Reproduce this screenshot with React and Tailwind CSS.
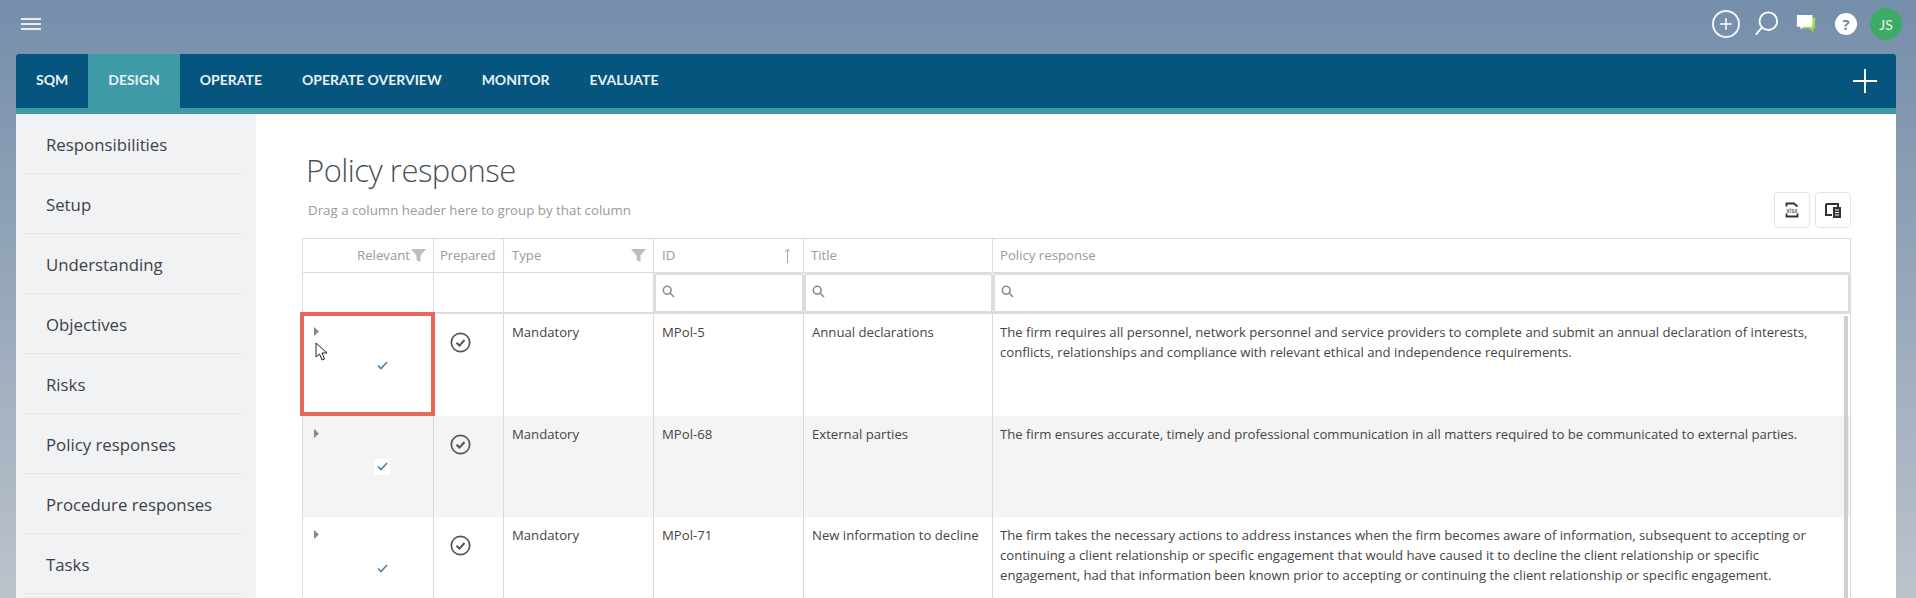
import { Plus } from "lucide-react";

const tabs = ["SQM", "DESIGN", "OPERATE", "OPERATE OVERVIEW", "MONITOR", "EVALUATE"];
const sideItems = ["Responsibilities", "Setup", "Understanding", "Objectives", "Risks", "Policy responses", "Procedure responses", "Tasks"];
const cols = "grid grid-cols-[131px_70px_150px_150px_189px_1fr]";

const rows = [
  {
    id: "MPol-5",
    title: "Annual declarations",
    text: "The firm requires all personnel, network personnel and service providers to complete and submit an annual declaration of interests, conflicts, relationships and compliance with relevant ethical and independence requirements.",
  },
  {
    id: "MPol-68",
    title: "External parties",
    text: "The firm ensures accurate, timely and professional communication in all matters required to be communicated to external parties.",
  },
  {
    id: "MPol-71",
    title: "New information to decline",
    text: "The firm takes the necessary actions to address instances when the firm becomes aware of information, subsequent to accepting or continuing a client relationship or specific engagement that would have caused it to decline the client relationship or specific engagement, had that information been known prior to accepting or continuing the client relationship or specific engagement.",
  },
];

function Filter() {
  return (
    <svg width="15" height="15" viewBox="0 0 15 15" className="fill-[#bdbdbd]">
      <path d="M0 1h15L9.5 7.5V14l-4-2V7.5z" />
    </svg>
  );
}

function SearchBox() {
  return (
    <div className="h-[40px] border-2 border-[#dcdcdc] rounded-[3px] flex items-center pl-[6px] pb-[3px] bg-white">
      <svg width="13" height="13" viewBox="0 0 13 13" fill="none" className="stroke-[#8a8a8a] stroke-[1.6]">
        <circle cx="5.2" cy="5.2" r="3.9" />
        <path d="M8 8l4 4" />
      </svg>
    </div>
  );
}

function Row({ row, striped }) {
  const cell = "border-r border-[#d9d9d9] h-[101.5px]";
  return (
    <div className={`${cols} ${striped ? "bg-[#f4f4f4]" : "bg-white"} text-[13.15px] leading-[20px] text-[#444]`}>
      <div className={`${cell} relative`}>
        <svg width="5" height="9" viewBox="0 0 5 9" className="absolute left-[11px] top-[13px] fill-[#888]">
          <path d="M0 0l5 4.5L0 9z" />
        </svg>
        <div className="absolute left-[71px] top-[43px] w-[16px] h-[16px] bg-white flex items-center justify-center">
          <svg width="11" height="9" viewBox="0 0 11 9" fill="none" className="stroke-[#4a7fae] stroke-[1.6]">
            <path d="M1 4.5L4 7.5 10 1" />
          </svg>
        </div>
      </div>
      <div className={`${cell} pl-[16px] pt-[18px]`}>
        <svg width="21" height="21" viewBox="0 0 21 21" fill="none" className="stroke-[#555] stroke-[1.7]">
          <circle cx="10.5" cy="10.5" r="9.2" />
          <path d="M6.5 10.8l3 2.8 5-5.6" strokeWidth="2" />
        </svg>
      </div>
      <div className={`${cell} pl-[8px] pt-[8px]`}>Mandatory</div>
      <div className={`${cell} pl-[8px] pt-[8px]`}>{row.id}</div>
      <div className={`${cell} pl-[8px] pt-[8px]`}>{row.title}</div>
      <div className="h-[101.5px] pl-[7px] pr-[28px] pt-[8px]">{row.text}</div>
    </div>
  );
}

export default function App() {
  return (
    <div className="relative h-[598px] overflow-hidden bg-gradient-to-b from-[#758eaa] to-[#bcc3cb] font-['Open_Sans',sans-serif]">
      {/* top bar */}
      <div className="h-[54px] flex items-center justify-between pl-[21px] pr-[14px] pb-[6px]">
        <div className="flex flex-col gap-[2.5px] w-[20px]">
          <div className="h-[2.5px] bg-[#e6edf4]" />
          <div className="h-[2.5px] bg-[#e6edf4]" />
          <div className="h-[2.5px] bg-[#e6edf4]" />
        </div>
        <div className="flex items-center">
          <div className="w-[28px] h-[28px] rounded-full border-2 border-[#eef2f6] flex items-center justify-center mr-[14px]">
            <Plus size={18} strokeWidth={2} className="text-white" />
          </div>
          <svg width="25" height="26" viewBox="0 0 26 28" fill="none" className="stroke-white stroke-2 mr-[17px]">
            <circle cx="15" cy="11" r="9.5" />
            <path d="M8 18l-6.5 7.5" />
          </svg>
          <svg width="20" height="20" viewBox="0 0 22 22" className="mr-[19px]">
            <path d="M6 4h15v12h-2v4l-4-4H6z" fill="#a8d84a" />
            <path d="M1 1h17v13H8l-3 3v-3H1z" fill="#fff" />
          </svg>
          <div className="w-[22px] h-[22px] rounded-full bg-white text-[#6f87a0] text-[15px] font-bold flex items-center justify-center mr-[13px]">?</div>
          <div className="w-[32px] h-[32px] rounded-full bg-[#3dab66] text-[#e8f6ee] text-[14px] flex items-center justify-center font-['Lato',sans-serif]">JS</div>
        </div>
      </div>

      <div className="ml-[16px] mr-[20px]">
        {/* tab bar */}
        <div className="h-[54px] bg-[#05557e] rounded-t-[3px] flex items-stretch justify-between pr-[18px]">
          <div className="flex">
            {tabs.map((t) => (
              <div
                key={t}
                className={`px-[20px] pb-[3px] flex items-center text-[14px] font-bold text-[#e9f1f5] font-['Lato',sans-serif] ${t === "DESIGN" ? "bg-[#3d9aa6]" : ""}`}
              >
                {t}
              </div>
            ))}
          </div>
          <div className="flex items-center">
            <svg width="26" height="26" viewBox="0 0 26 26" className="stroke-white stroke-2">
              <path d="M1 13h24M13 1v24" />
            </svg>
          </div>
        </div>
        <div className="h-[6px] bg-[#3d9aa6]" />

        <div className="flex bg-white h-[500px]">
          {/* sidebar */}
          <div className="w-[240px] bg-[#f1f2f4] pl-[9px] pr-[13px]">
            {sideItems.map((s) => (
              <div key={s} className="h-[60px] border-b border-[#e4e5e7] flex items-center pl-[21px] pt-[2px] text-[16.8px] text-[#3c4149]">
                {s}
              </div>
            ))}
          </div>

          {/* content */}
          <div className="flex-1 pl-[46px] pr-[45px]">
            <h1 className="pt-[34px] pl-[4px] text-[31px] tracking-[-0.5px] leading-[44px] font-light text-[#4a525b]">Policy response</h1>
            <div className="flex justify-between items-start">
              <div className="pl-[6px] pt-[8px] text-[13.3px] leading-[20px] text-[#9a9a9a]">Drag a column header here to group by that column</div>
              <div className="flex gap-[5px]">
                <div className="w-[36px] h-[36px] rounded-[4px] border border-[#e3e3e3] flex items-center justify-center">
                  <svg width="16" height="16" viewBox="0 0 16 16" fill="none" className="stroke-[#333] stroke-[1.8]">
                    <path d="M2.5 4.5V1.5h7.5l3.5 3v0M2.5 11.5v3h11v-3" />
                    <text x="8" y="10.5" textAnchor="middle" fontSize="6.5" fill="#333" stroke="none" fontFamily="Open Sans, sans-serif">xlsx</text>
                  </svg>
                </div>
                <div className="w-[36px] h-[36px] rounded-[4px] border border-[#e3e3e3] flex items-center justify-center">
                  <svg width="16" height="15" viewBox="0 0 16 15">
                    <path d="M1 1h12v3M1 1v11h6" fill="none" stroke="#333" strokeWidth="2" />
                    <path d="M8 4h8v11H8z" fill="#333" />
                    <path d="M10 7h4M10 9.5h4M10 12h4" stroke="#fff" strokeWidth="1" />
                  </svg>
                </div>
              </div>
            </div>

            {/* grid */}
            <div className="mt-[10px] border-l border-r border-t border-[#dcdcdc]">
              <div className={`${cols} h-[34px] border-b border-[#dcdcdc] text-[13.2px] text-[#9a9a9a]`}>
                <div className="border-r border-[#dcdcdc] flex items-center justify-end pr-[7px] gap-[1px]">
                  Relevant <Filter />
                </div>
                <div className="border-r border-[#dcdcdc] flex items-center pl-[6px] tracking-[-0.2px]">Prepared</div>
                <div className="border-r border-[#dcdcdc] flex items-center justify-between pl-[8px] pr-[7px]">
                  Type <Filter />
                </div>
                <div className="border-r border-[#dcdcdc] flex items-center justify-between pl-[8px] pr-[12px]">
                  ID
                  <svg width="7" height="15" viewBox="0 0 7 15" fill="none" className="stroke-[#aaa]">
                    <path d="M3.5 15V1M1 4l2.5-3L6 4" />
                  </svg>
                </div>
                <div className="border-r border-[#dcdcdc] flex items-center pl-[7px]">Title</div>
                <div className="flex items-center pl-[7px]">Policy response</div>
              </div>
              <div className={`${cols} h-[41px] border-b-2 border-[#dcdcdc]`}>
                <div className="border-r border-[#dcdcdc]" />
                <div className="border-r border-[#dcdcdc]" />
                <div className="border-r border-[#dcdcdc]" />
                <SearchBox />
                <SearchBox />
                <SearchBox />
              </div>
              <div className="relative">
                {rows.map((r, i) => (
                  <Row key={r.id} row={r} striped={i === 1} />
                ))}
                {/* highlight round first cell */}
                <div className="absolute left-[-3px] top-[-2px] w-[135px] h-[104px] border-4 border-[#e8675a]" />
                {/* mouse pointer */}
                <svg width="13" height="20" viewBox="0 0 13 20" className="absolute left-[12px] top-[28px]">
                  <path d="M1 1v14l3.5-3 2.5 6 2.5-1-2.5-6H12z" fill="#fff" stroke="#222" strokeWidth="1" />
                </svg>
                {/* scrollbar */}
                <div className="absolute right-[2px] top-[2px] bottom-0 w-[4px] bg-[#cfcfcf]" />
              </div>
            </div>
          </div>
        </div>
      </div>
    </div>
  );
}
